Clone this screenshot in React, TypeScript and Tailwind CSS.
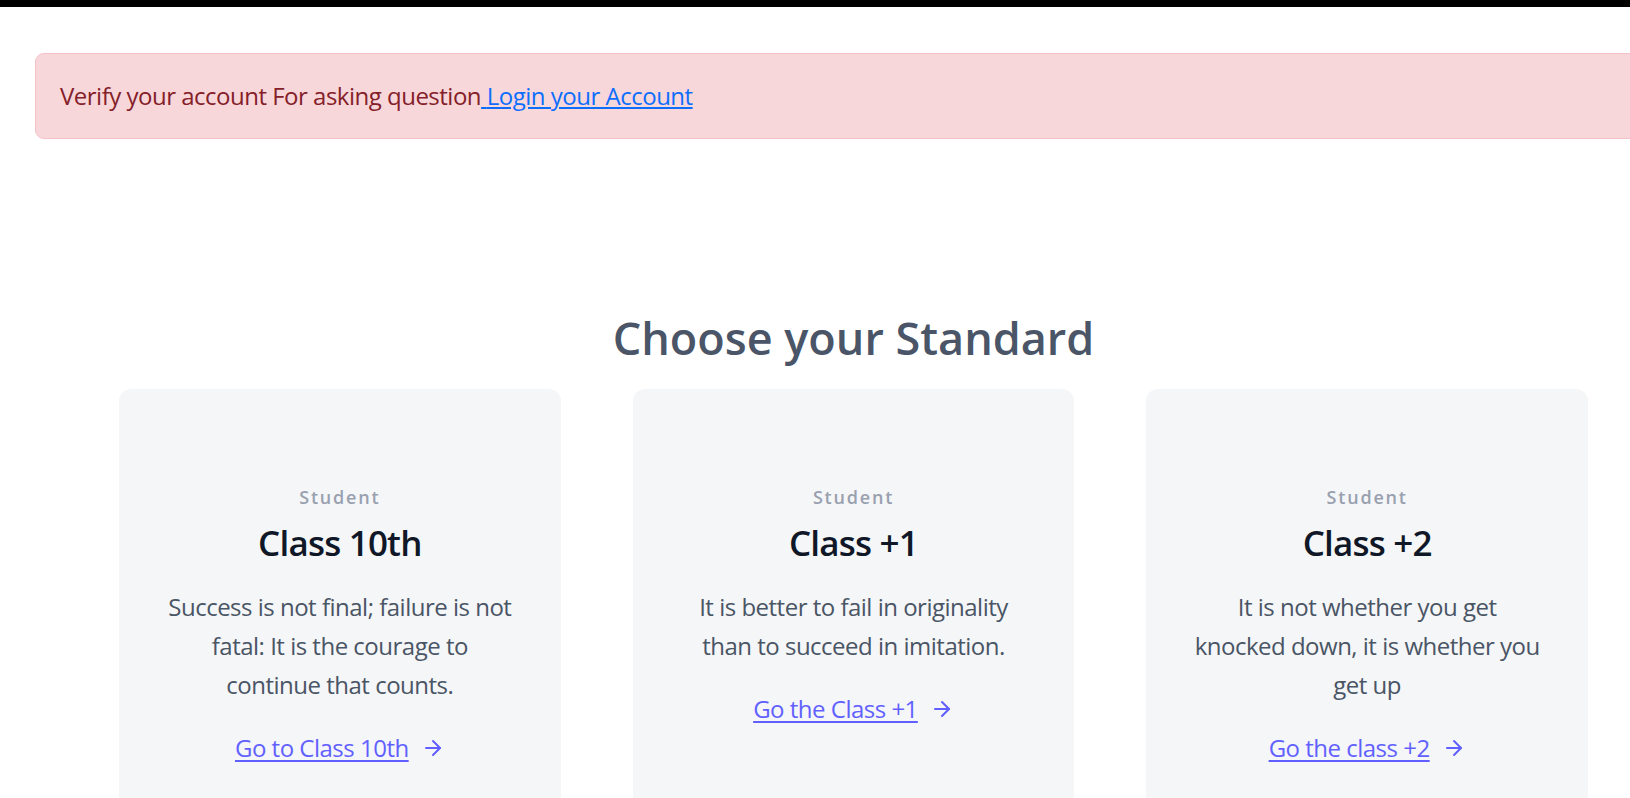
import React from 'react';

const font = { fontFamily: '"Open Sans", "Noto Sans", sans-serif' };

interface Standard {
  label: string;
  title: string;
  quote: string;
  link: string;
}

const standards: Standard[] = [
  {
    label: 'Student',
    title: 'Class 10th',
    quote: 'Success is not final; failure is not fatal: It is the courage to continue that counts.',
    link: 'Go to Class 10th',
  },
  {
    label: 'Student',
    title: 'Class +1',
    quote: 'It is better to fail in originality than to succeed in imitation.',
    link: 'Go the Class +1',
  },
  {
    label: 'Student',
    title: 'Class +2',
    quote: 'It is not whether you get knocked down, it is whether you get up',
    link: 'Go the class +2',
  },
];

const StandardCard: React.FC<{ item: Standard }> = ({ item }) => (
  <div className="h-full bg-[#f5f6f8] px-12 pt-24 pb-36 rounded-xl overflow-hidden text-center">
    <h2 className="tracking-widest text-[18px] leading-6 font-semibold text-gray-400 mb-1.5">{item.label}</h2>
    <h1 className="text-[35px] leading-[48px] font-semibold tracking-[-0.8px] text-gray-900 pt-1 mb-5">{item.title}</h1>
    <p className="text-[24px] leading-[39px] tracking-[-0.5px] text-gray-600 mb-6">{item.quote}</p>
    <a href="#" className="text-indigo-500 inline-flex items-center text-[24px] leading-[39px] tracking-[-0.5px]">
      <span className="underline underline-offset-[3px]">{item.link}</span>
      <svg className="w-6 h-6 ml-3" viewBox="0 0 24 24" stroke="currentColor" strokeWidth="2" fill="none" strokeLinecap="round" strokeLinejoin="round">
        <path d="M5 12h14" />
        <path d="M12 5l7 7-7 7" />
      </svg>
    </a>
  </div>
);

export default function App() {
  return (
    <div className="min-h-screen bg-white overflow-hidden" style={font}>
      <div className="h-[7px] bg-black" />

      <div className="mt-[46px] ml-[35px] w-[1700px] border border-[#f5c2c7] bg-[#f8d7da] text-[#842029] rounded-[9px] p-6 text-[24px] leading-9 tracking-[-0.5px]">
        Verify your account For asking question
        <a href="#" className="text-[#0d6efd] underline">{' '}Login your Account</a>
      </div>

      <section className="ml-[119px] w-[1469px] mt-[172px]">
        <h1 className="text-[45px] leading-[54px] font-semibold text-[#4a5568] text-center mb-6">Choose your Standard</h1>
        <div className="grid grid-cols-3 gap-[72px]">
          {standards.map(s => (
            <StandardCard key={s.title} item={s} />
          ))}
        </div>
      </section>
    </div>
  );
}
